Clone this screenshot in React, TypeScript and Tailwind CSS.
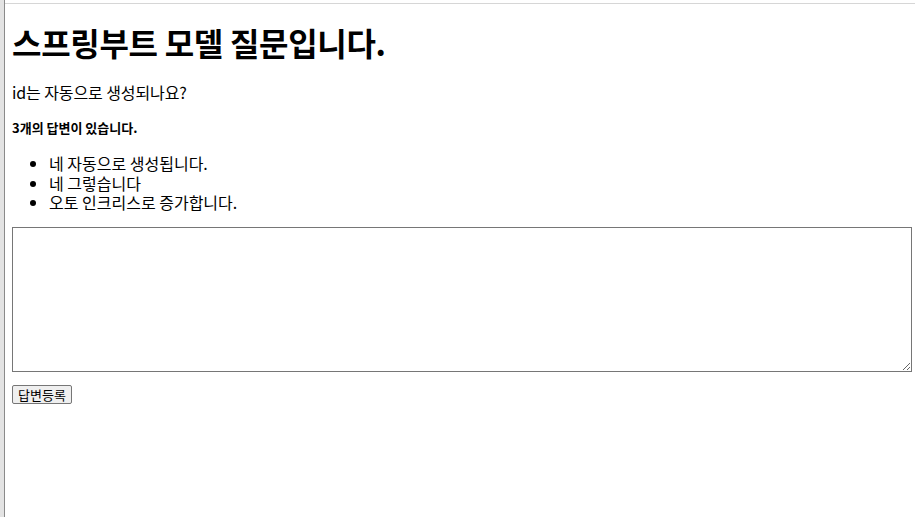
export default function App() {
  return (
    <div
      className="flex min-h-[517px] w-[915px] bg-white text-black overflow-hidden"
      style={{ fontFamily: '"Noto Sans CJK KR", "Noto Sans", sans-serif' }}
    >
      <div className="w-[5px] shrink-0 flex">
        <div className="w-[4px] bg-[#e3e3e3]" />
        <div className="w-px bg-[#8a8a8a]" />
      </div>
      <div className="flex-1 flex flex-col">
        <div className="h-[3px]" />
        <div className="h-px bg-[#d6d6d6]" />
        <div className="pl-[7px] flex flex-col items-start">
          <h1 className="mt-[20px] text-[32px] leading-[37px] font-bold tracking-[-0.3px]">
            스프링부트 모델 질문입니다.
          </h1>
          <p className="mt-[21px] text-[16px] leading-[20px] tracking-[-0.1px]">id는 자동으로 생성되나요?</p>
          <h5 className="mt-[18px] text-[13px] leading-[16px] font-bold">3개의 답변이 있습니다.</h5>
          <ul className="mt-[18px] list-disc pl-[37px] text-[16px] leading-[19.5px]">
            <li>네 자동으로 생성됩니다.</li>
            <li>네 그렇습니다</li>
            <li>오토 인크리스로 증가합니다.</li>
          </ul>
          <textarea className="mt-[14px] w-[900px] h-[145px] border border-[#767676] rounded-none block outline-none" />
          <button className="mt-[13px] h-[19px] px-[5px] text-[13px] leading-[15px] border border-[#767676] bg-[#efefef] rounded-[2px]">
            답변등록
          </button>
        </div>
      </div>
    </div>
  );
}
